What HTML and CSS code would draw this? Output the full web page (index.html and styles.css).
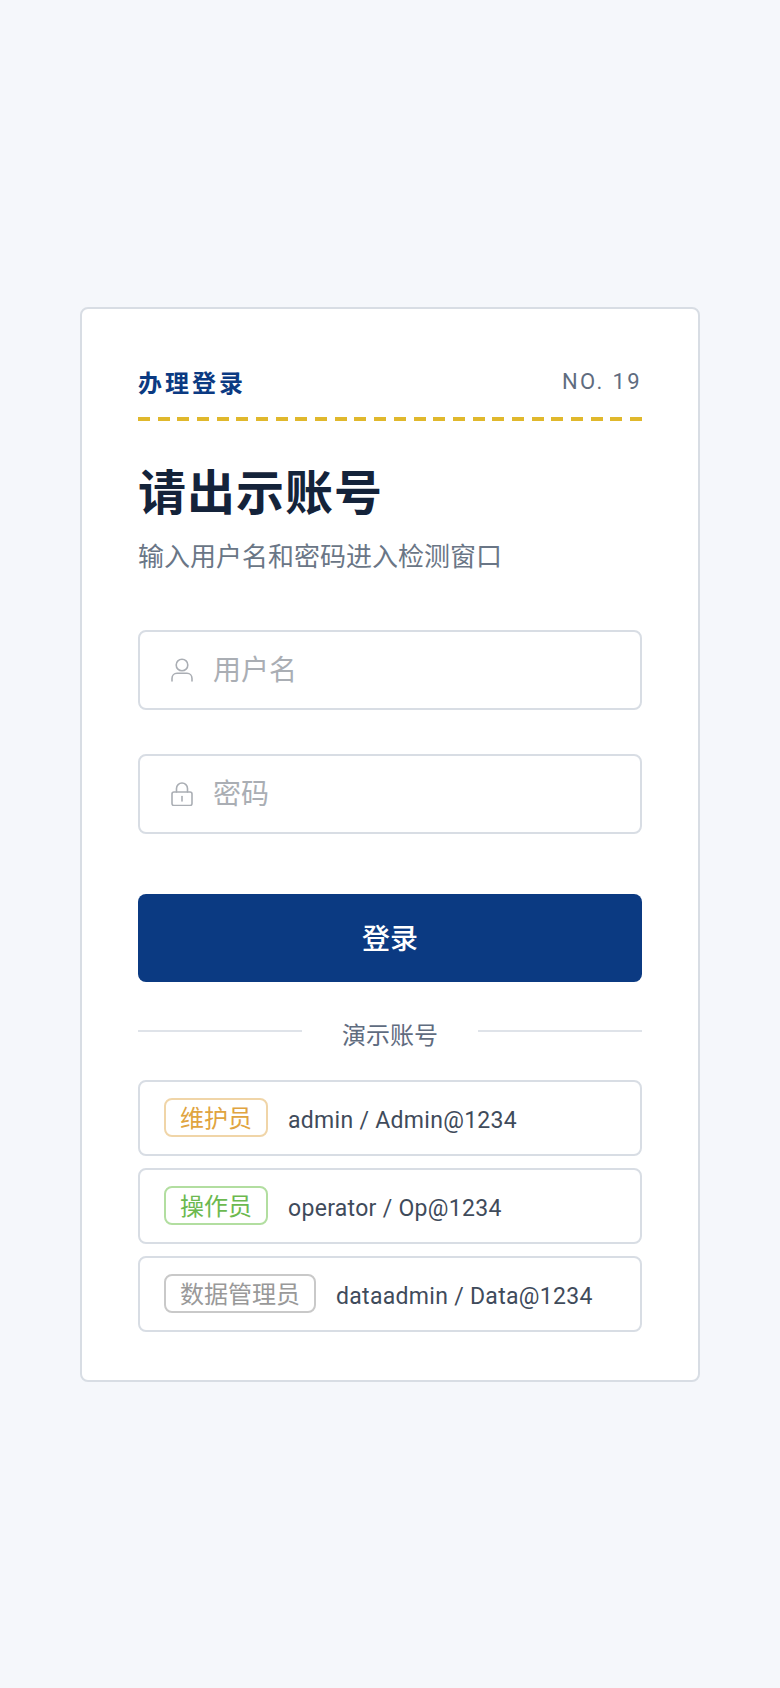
FILE: index.html
```html
<!DOCTYPE html>
<html lang="zh-CN">
<head>
  <meta charset="UTF-8" />
  <meta name="viewport" content="width=device-width, initial-scale=1.0"/>
  <title>办理登录</title>
  <link rel="stylesheet" href="styles.css">
</head>
<body>

<main class="card">
  <div class="ticket">
    <span class="ticket-title">办理登录</span>
    <span class="ticket-no">NO. 19</span>
  </div>

  <h1>请出示账号</h1>
  <p class="subtitle">输入用户名和密码进入检测窗口</p>

  <div class="field">
    <svg class="field-icon" width="24" height="24" viewBox="0 0 24 24" fill="none" stroke="currentColor" stroke-width="1.6" stroke-linecap="round" stroke-linejoin="round">
      <circle cx="12" cy="7" r="5.800"/>
      <path d="M2 23v-2.500c0-3 2.200-5.200 5-5.200h10c2.800 0 5 2.200 5 5.200V23"/>
    </svg>
    <span class="placeholder">用户名</span>
  </div>

  <div class="field">
    <svg class="field-icon" width="24" height="24" viewBox="0 0 24 24" fill="none" stroke="currentColor" stroke-width="1.6" stroke-linecap="round" stroke-linejoin="round">
      <rect x="2" y="10" width="20" height="13.500" rx="2"/>
      <path d="M6.500 10V6.500a5.500 5.500 0 0 1 11 0V10"/>
      <path d="M12 14.500v4.500"/>
    </svg>
    <span class="placeholder">密码</span>
  </div>

  <button class="login-btn">登录</button>

  <div class="divider"><span>演示账号</span></div>

  <div class="demo-list">
    <div class="demo-row">
      <span class="tag tag-orange">维护员</span>
      <span class="demo-text">admin / Admin@1234</span>
    </div>
    <div class="demo-row">
      <span class="tag tag-green">操作员</span>
      <span class="demo-text">operator / Op@1234</span>
    </div>
    <div class="demo-row">
      <span class="tag tag-gray">数据管理员</span>
      <span class="demo-text">dataadmin / Data@1234</span>
    </div>
  </div>
</main>

</body>
</html>
```

FILE: styles.css
```css
* {
  box-sizing: border-box;
}

body {
  margin: 0;
  min-height: 1688px;
  background: #f5f7fb;
  font-family: Roboto, "Noto Sans CJK SC", sans-serif;
  display: flex;
  justify-content: center;
  padding-top: 307px;
}

.card {
  width: 620px;
  height: 1075px;
  background: #fff;
  border: 2px solid #d8dde4;
  border-radius: 8px;
  padding: 56px;
}

.ticket {
  display: flex;
  justify-content: space-between;
  align-items: center;
  height: 56px;
  padding-bottom: 24px;
  background: repeating-linear-gradient(90deg, #e0b82c 0 12px, transparent 12px 19.68px) left bottom / 100% 4px no-repeat;
}

.ticket-title {
  font-size: 24px;
  font-weight: 700;
  letter-spacing: 3px;
  color: #0b3a82;
}

.ticket-no {
  font-size: 22px;
  letter-spacing: 2.4px;
  color: #5f6c7f;
}

h1 {
  margin: 41px 0 0;
  font-size: 48px;
  line-height: 64px;
  font-weight: 700;
  letter-spacing: 1px;
  color: #14233a;
}

.subtitle {
  margin: 12px 0 0;
  font-size: 26px;
  line-height: 38px;
  color: #6a7686;
}

.field {
  display: flex;
  align-items: center;
  height: 80px;
  padding: 0 30px;
  border: 2px solid #d8dde4;
  border-radius: 8px;
  margin-top: 44px;
  color: #aaaeb4;
}

.subtitle + .field {
  margin-top: 54px;
}

.field-icon {
  margin-right: 19px;
  flex: none;
}

.placeholder {
  padding-bottom: 4px;
  font-size: 28px;
  color: #aaaeb4;
}

.login-btn {
  display: block;
  width: 100%;
  height: 88px;
  margin-top: 60px;
  padding-bottom: 4px;
  border: none;
  border-radius: 8px;
  background: #0b3a82;
  color: #fff;
  font-family: inherit;
  font-size: 28px;
  font-weight: 500;
}

.divider {
  display: flex;
  align-items: center;
  gap: 40px;
  margin-top: 32px;
  height: 34px;
  font-size: 24px;
  color: #5f6c7f;
}

.divider span {
  padding-top: 4px;
}

.divider::before,
.divider::after {
  content: "";
  flex: 1;
  height: 2px;
  background: #dfe3e9;
}

.demo-list {
  display: flex;
  flex-direction: column;
  gap: 12px;
  margin-top: 32px;
}

.demo-row {
  display: flex;
  align-items: center;
  gap: 20px;
  height: 76px;
  padding: 0 24px;
  border: 2px solid #d8dde4;
  border-radius: 8px;
}

.tag {
  height: 39px;
  margin-bottom: 1px;
  padding: 3px 14px 0;
  line-height: 32px;
  font-size: 24px;
  border: 2px solid;
  border-radius: 8px;
}

.tag-orange {
  color: #e0a440;
  border-color: #f0d5a8;
}

.tag-green {
  color: #6cb94f;
  border-color: #b2dea0;
}

.tag-gray {
  color: #999;
  border-color: #c9c9c9;
}

.demo-text {
  padding-top: 4px;
  font-size: 23px;
  letter-spacing: 0.3px;
  color: #3f4b5b;
}
```
